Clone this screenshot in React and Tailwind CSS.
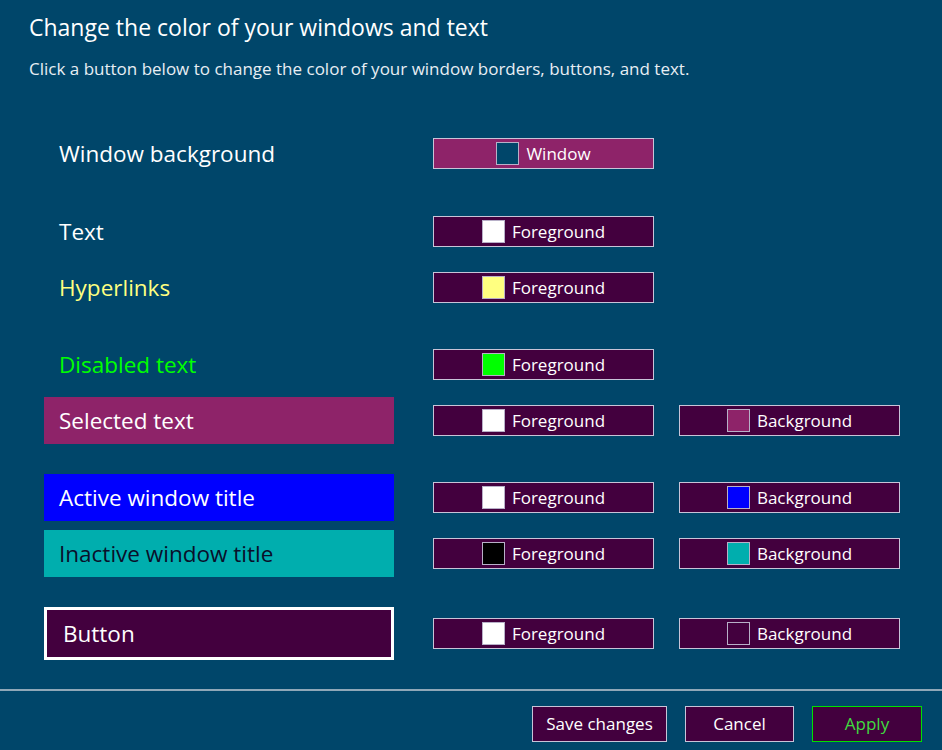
const BG = 'bg-[#00466a]'

function Swatch({ color }) {
  return <span className={`inline-block w-[23px] h-[23px] border border-[#b8b0c8] ${color}`} />
}

function ColorButton({ label, swatch, magenta }) {
  return (
    <button
      className={`w-[221px] h-[31px] flex items-center justify-center gap-[7px] border border-[#c8c4d8] text-[17px] text-white ${magenta ? 'bg-[#8e2369]' : 'bg-[#43003e]'}`}
    >
      <Swatch color={swatch} />
      <span className="leading-none pb-[1px]">{label}</span>
    </button>
  )
}

function Row({ label, labelClass, boxClass, fg, bg, window, className = '' }) {
  return (
    <div className={`flex items-center ${className}`}>
      <div className={`w-[350px] h-full flex items-center text-[22.5px] ${boxClass ?? 'pl-[15px]'} ${labelClass}`}>
        {label}
      </div>
      <div className="ml-[39px] flex gap-[25px]">
        {window ? (
          <ColorButton label="Window" swatch="bg-[#00466a]" magenta />
        ) : (
          <ColorButton label="Foreground" swatch={fg} />
        )}
        {bg && <ColorButton label="Background" swatch={bg} />}
      </div>
    </div>
  )
}

export default function App() {
  return (
    <div className={`w-[942px] h-[750px] ${BG} text-white overflow-hidden`} style={{ fontFamily: '"Open Sans", "Noto Sans", sans-serif' }}>
      <div className="pl-[29px] pt-[12px]">
        <h1 className="text-[23px] leading-[30px]">Change the color of your windows and text</h1>
        <p className="mt-[17px] text-[17px] leading-[20px] text-[#e8eef4]">
          Click a button below to change the color of your window borders, buttons, and text.
        </p>
      </div>

      <div className="pl-[44px] mt-[51px] flex flex-col">
        <Row className="h-[47px]" label="Window background" labelClass="text-white" window />
        <Row className="h-[47px] mt-[31px]" label="Text" labelClass="text-white" fg="bg-white" />
        <Row className="h-[47px] mt-[9px]" label="Hyperlinks" labelClass="text-[#ffff80]" fg="bg-[#ffff80]" />
        <Row className="h-[47px] mt-[30px]" label="Disabled text" labelClass="text-[#00ff00]" fg="bg-[#00ff00]" />
        <Row
          className="h-[47px] mt-[9px]"
          label="Selected text"
          boxClass="pl-[15px] bg-[#8e2369]"
          labelClass="text-white"
          fg="bg-white"
          bg="bg-[#8e2369]"
        />
        <Row
          className="h-[47px] mt-[30px]"
          label="Active window title"
          boxClass="pl-[15px] bg-[#0000ff]"
          labelClass="text-white"
          fg="bg-white"
          bg="bg-[#0000ff]"
        />
        <Row
          className="h-[47px] mt-[9px]"
          label="Inactive window title"
          boxClass="pl-[15px] bg-[#00aeae]"
          labelClass="text-[#0a0f2a]"
          fg="bg-black"
          bg="bg-[#00aeae]"
        />
        <Row
          className="h-[53px] mt-[30px]"
          label="Button"
          boxClass="pl-[16px] bg-[#43003e] border-[3px] border-white"
          labelClass="text-white"
          fg="bg-white"
          bg="bg-[#43003e]"
        />
      </div>

      <div className="mt-[29px] border-t-2 border-[#8fa8b8]" />

      <div className="flex justify-end gap-[18px] pr-[20px] mt-[15px]">
        <button className="w-[135px] h-[36px] bg-[#43003e] border border-[#c8c4d8] text-[17px] text-white">Save changes</button>
        <button className="w-[109px] h-[36px] bg-[#43003e] border border-[#c8c4d8] text-[17px] text-white">Cancel</button>
        <button className="w-[110px] h-[36px] bg-[#43003e] border border-[#00e000] text-[17px] text-[#3fdc3f]">Apply</button>
      </div>
    </div>
  )
}
